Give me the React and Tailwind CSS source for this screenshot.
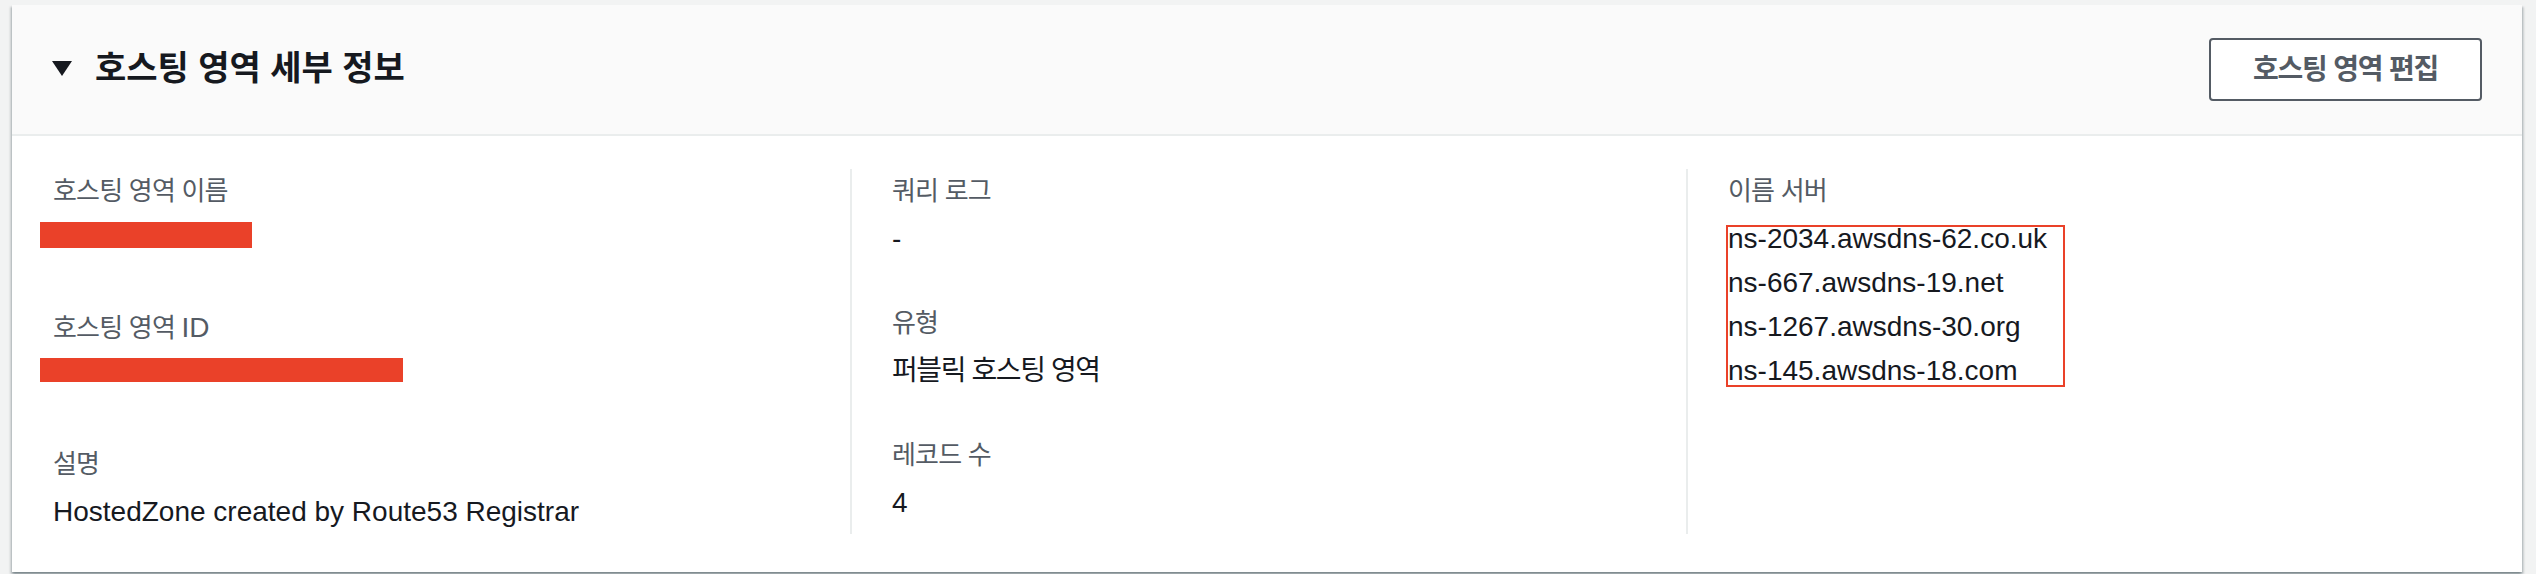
const KO = '[font-family:"Liberation_Sans","Noto_Sans_CJK_KR",sans-serif]'

function Label({ children }) {
  return (
    <div className="h-[44px] leading-[44px] text-[26px] tracking-[-0.8px] text-[#545b64] whitespace-nowrap">
      {children}
    </div>
  )
}

function Value({ children, korean }) {
  return (
    <div
      className={
        'mt-[4px] h-[44px] leading-[44px] text-[28px] text-[#16191f] whitespace-nowrap ' +
        (korean ? 'text-[26px] tracking-[-1.4px]' : '')
      }
    >
      {children}
    </div>
  )
}

// red redaction bar drawn over a hidden value
function Redacted({ width, height, top }) {
  return (
    <div className="mt-[4px] h-[44px]">
      <div
        className="-ml-[13px] bg-[#ea4129]"
        style={{ width, height, marginTop: top }}
      />
    </div>
  )
}

const nameServers = [
  'ns-2034.awsdns-62.co.uk',
  'ns-667.awsdns-19.net',
  'ns-1267.awsdns-30.org',
  'ns-145.awsdns-18.com',
]

export default function App() {
  return (
    <div className={'min-h-screen bg-[#f2f3f3] pl-[12px] pr-[14px] pt-[5px] ' + KO}>
      <div className="bg-white shadow-[0_2px_2px_0_rgba(0,28,36,0.3),2px_2px_2px_0_rgba(0,28,36,0.15),-2px_2px_2px_0_rgba(0,28,36,0.15)]">
        {/* Header */}
        <div className="flex items-center justify-between h-[131px] bg-[#fafafa] border-b-2 border-[#eaeded] px-[40px]">
          <div className="flex items-center gap-[23px] -mt-[3px]">
            <svg width="20" height="15" viewBox="0 0 20 15">
              <polygon points="0,0 20,0 10,15" fill="#16191f" />
            </svg>
            <h2 className="text-[34px] font-bold tracking-[0px] text-[#16191f] leading-none">
              호스팅 영역 세부 정보
            </h2>
          </div>
          <button className="h-[63px] w-[273px] border-2 border-[#545b64] rounded-[4px] bg-white text-[28px] font-bold tracking-[-1.2px] text-[#545b64]">
            호스팅 영역 편집
          </button>
        </div>

        {/* Body */}
        <div className="flex pl-[41px] pr-[40px] pt-[33px] pb-[38px]">
          <div className="w-[797px] flex flex-col gap-[40px]">
            <div>
              <Label>호스팅 영역 이름</Label>
              <Redacted width={212} height={26} top={9} />
            </div>
            <div>
              <Label>
                호스팅 영역 <span className="text-[28px] tracking-normal">ID</span>
              </Label>
              <Redacted width={363} height={24} top={8} />
            </div>
            <div>
              <Label>설명</Label>
              <Value>HostedZone created by Route53 Registrar</Value>
            </div>
          </div>

          <div className="w-[836px] border-l-2 border-[#eaeded] pl-[40px] flex flex-col gap-[40px]">
            <div>
              <Label>쿼리 로그</Label>
              <Value>-</Value>
            </div>
            <div>
              <Label>유형</Label>
              <Value korean>퍼블릭 호스팅 영역</Value>
            </div>
            <div>
              <Label>레코드 수</Label>
              <Value>4</Value>
            </div>
          </div>

          <div className="flex-1 border-l-2 border-[#eaeded] pl-[40px]">
            <Label>이름 서버</Label>
            <div className="relative mt-[4px]">
              {nameServers.map((ns) => (
                <div key={ns} className="h-[44px] leading-[44px] text-[28px] text-[#16191f]">
                  {ns}
                </div>
              ))}
              <div className="absolute top-[8px] -left-[2px] w-[339px] h-[162px] border-2 border-[#ea4129]" />
            </div>
          </div>
        </div>
      </div>
    </div>
  )
}
